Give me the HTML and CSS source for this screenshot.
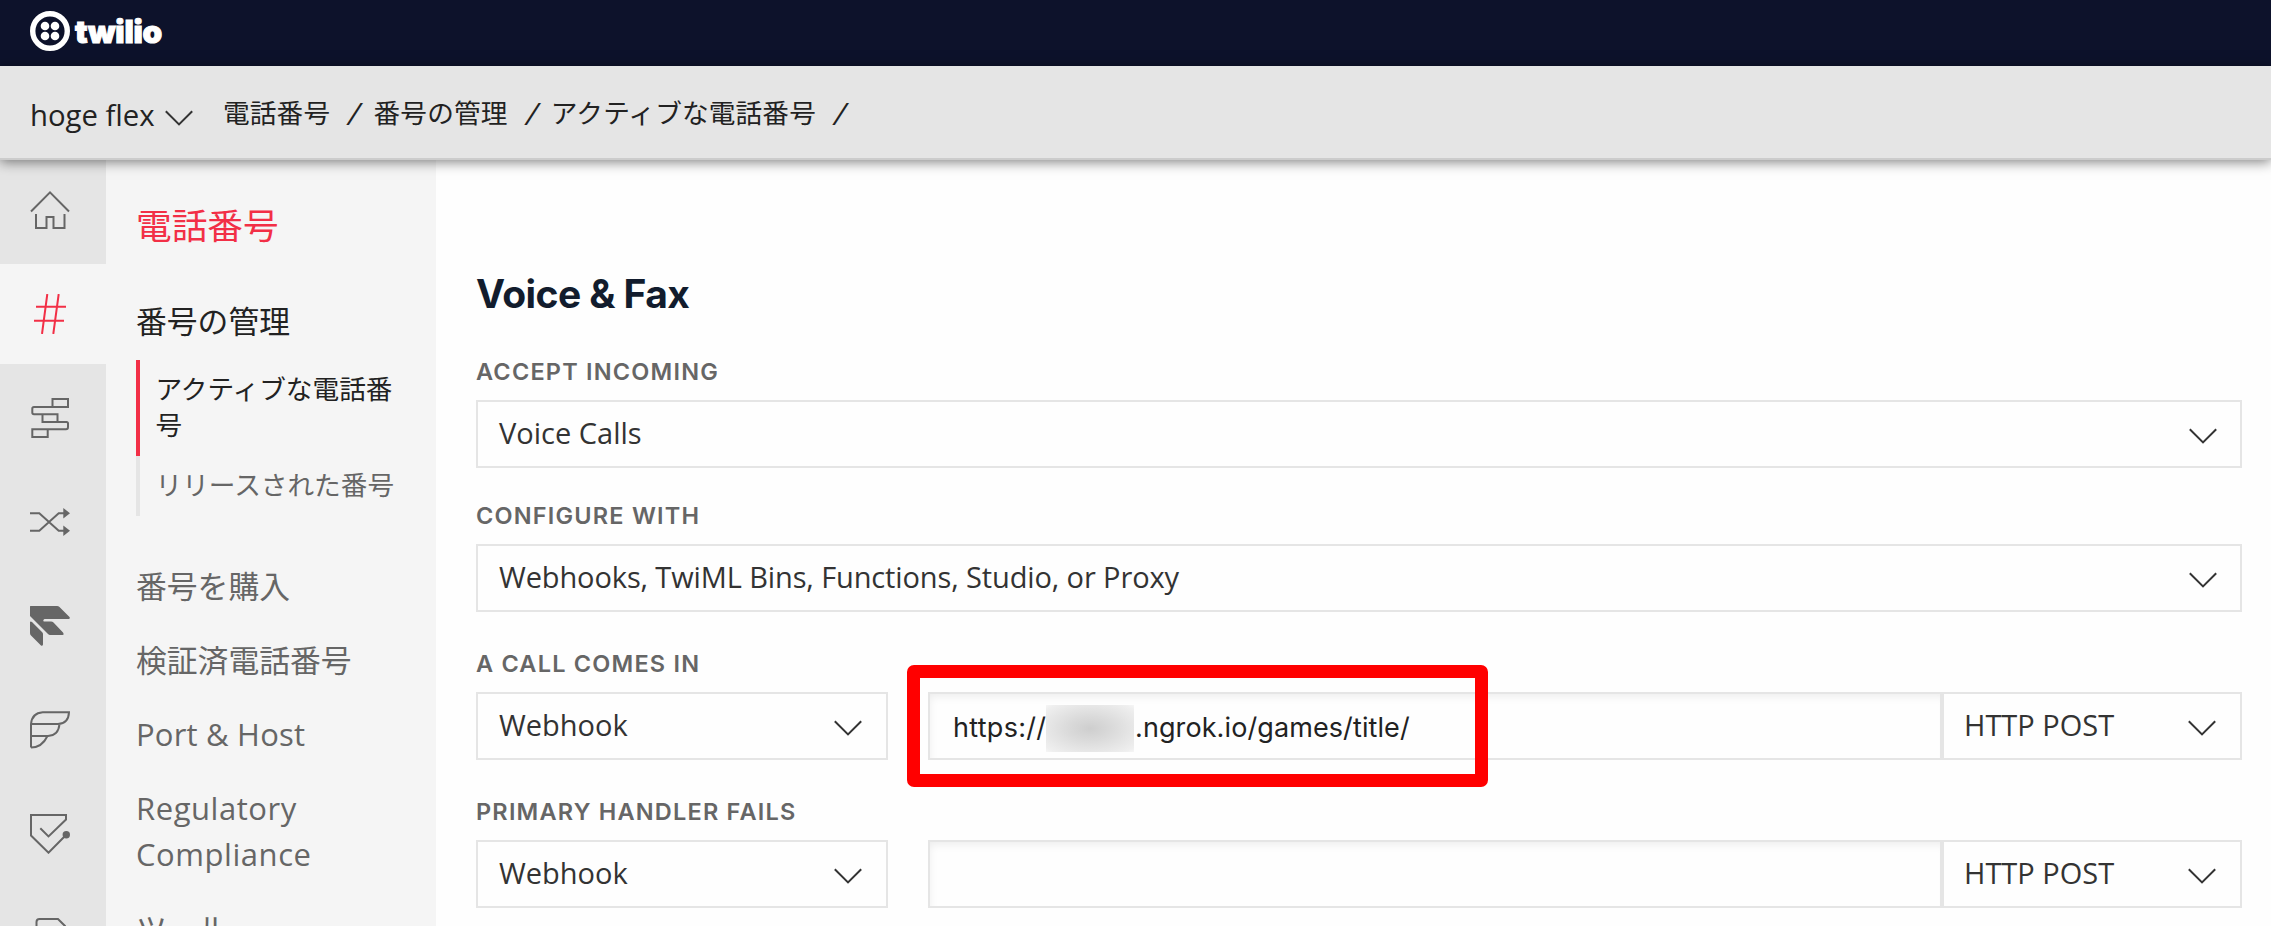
FILE: index.html
```html
<!DOCTYPE html>
<html lang="ja">
<head>
<meta charset="utf-8">
<title>Twilio Console</title>
<link rel="stylesheet" href="styles.css">
</head>
<body>
<svg class="defs" aria-hidden="true">
  <symbol id="chevron" viewBox="0 0 28 16"><path d="M.8 1.2L14 14.4L27.2 1.2" fill="none" stroke="currentColor" stroke-width="2"/></symbol>
</svg>
<header class="topbar">
  <svg class="logo-mark" viewBox="0 0 40 40"><circle cx="20" cy="20" r="17.3" fill="none" stroke="#fff" stroke-width="5.4"/><g fill="#fff"><circle cx="15" cy="15" r="4.3"/><circle cx="25" cy="15" r="4.3"/><circle cx="15" cy="25" r="4.3"/><circle cx="25" cy="25" r="4.3"/></g></svg>
  <span class="logo-word">twilio</span>
</header>
<nav class="crumbs">
  <span class="account">hoge flex</span>
  <svg class="chev account-chev"><use href="#chevron"/></svg>
  <span class="crumb">電話番号</span><span class="slash">/</span>
  <span class="crumb">番号の管理</span><span class="slash">/</span>
  <span class="crumb">アクティブな電話番号</span><span class="slash">/</span>
</nav>
<div class="body">
  <aside class="rail">
    <a class="rail-item first"><svg viewBox="0 0 40 40"><path d="M1 21.5L20 2.3L39 21.5M6 24V38H16.5V27H23.5V38H34.5V24"/></svg></a>
    <a class="rail-item active"><svg viewBox="0 0 40 40"><path d="M17.3 0L12 40M28.7 0L23.3 40M6 12.7H36M4 26.7H34"/></svg></a>
    <a class="rail-item"><svg viewBox="0 0 40 40"><path d="M22.5 9V1H38V9H4Q2.3 9 2.3 10.5V14.5Q2.3 16.3 4 16.3H27.5V24M12.5 16.3V24H36.5Q38 24 38 25.5V29Q38 31.3 36 31.3H2.3V39H17.7V31.3"/></svg></a>
    <a class="rail-item"><svg viewBox="0 0 40 40"><path d="M0 11.3H9.3L28.7 28.7H34M0 28.7H9.3L28.7 11.3H34"/><path class="fill" d="M33.3 6L40 11.3L33.3 16.6ZM33.3 23.4L40 28.7L33.3 34Z"/></svg></a>
    <a class="rail-item"><svg viewBox="0 0 40 40"><path class="fill" d="M0 .5Q0 0 .5 0H27Q28.500 0 29.500 1L39.500 11Q40.500 13 38.500 13H14.500Q12.500 14 13.800 15.500H21Q22.500 15.500 23.500 16.500L33 26.500Q34.500 29 32.500 29H20Q19 29 18 28L0 10ZM0 16Q.5 15 2 16L12 26Q13 27 13 28V38.500Q12.500 40.500 11 39.500L1 29.500Q0 28.500 0 27Z"/></svg></a>
    <a class="rail-item"><svg viewBox="0 0 40 40"><path d="M1 37.500V14Q2 3 12.700 2.200H39Q38.500 13.500 28 14H1M29.500 14Q28.500 25.500 18 26H1M17.500 26Q12 37.500 1 37.500"/></svg></a>
    <a class="rail-item"><svg viewBox="0 0 40 40"><path d="M10.300 14.300L18.500 22.400L36 5.500V1H1V21.500L18.500 38.700L36 21"/><circle class="fill" cx="36.300" cy="20.700" r="3.700"/></svg></a>
    <a class="rail-item"><svg viewBox="0 0 40 40"><path d="M6.500 39V4Q6.500 1 9.500 1H28L35 8V39Z"/></svg></a>
  </aside>
  <aside class="menu">
    <h2 class="menu-title">電話番号</h2>
    <a class="menu-item current">番号の管理</a>
    <div class="submenu">
      <a class="sub current">アクティブな電話番号</a>
      <a class="sub">リリースされた番号</a>
    </div>
    <a class="menu-item">番号を購入</a>
    <a class="menu-item">検証済電話番号</a>
    <a class="menu-item latin">Port &amp; Host</a>
    <a class="menu-item latin wider">Regulatory Compliance</a>
    <a class="menu-item">ツール</a>
  </aside>
  <main class="content">
    <h1 class="title">Voice &amp; Fax</h1>
    <section class="field">
      <label class="label">ACCEPT INCOMING</label>
      <div class="select wide"><span class="value">Voice Calls</span><svg class="chev"><use href="#chevron"/></svg></div>
    </section>
    <section class="field field-configure">
      <label class="label">CONFIGURE WITH</label>
      <div class="select wide"><span class="value value-long">Webhooks, TwiML Bins, Functions, Studio, or Proxy</span><svg class="chev"><use href="#chevron"/></svg></div>
    </section>
    <section class="field field-call">
      <label class="label">A CALL COMES IN</label>
      <div class="row">
        <div class="select kind"><span class="value">Webhook</span><svg class="chev"><use href="#chevron"/></svg></div>
        <div class="input"><span class="url url-start">https://</span><span class="masked"></span><span class="url url-end">.ngrok.io/games/title/</span><div class="highlight"></div></div>
        <div class="select method"><span class="value">HTTP POST</span><svg class="chev"><use href="#chevron"/></svg></div>
      </div>
    </section>
    <section class="field">
      <label class="label">PRIMARY HANDLER FAILS</label>
      <div class="row">
        <div class="select kind"><span class="value">Webhook</span><svg class="chev"><use href="#chevron"/></svg></div>
        <div class="input"></div>
        <div class="select method"><span class="value">HTTP POST</span><svg class="chev"><use href="#chevron"/></svg></div>
      </div>
    </section>
  </main>
</div>
</body>
</html>
```
FILE: styles.css
```css
* { box-sizing: border-box; }
body {
  margin: 0;
  height: 926px;
  overflow: hidden;
  display: flex;
  flex-direction: column;
  background: #fefefe;
  color: #222;
  font-family: "Open Sans", "Noto Sans CJK JP", sans-serif;
}
.defs { position: absolute; width: 0; height: 0; }
svg { flex: none; display: block; }

.topbar {
  height: 66px;
  flex: none;
  display: flex;
  align-items: center;
  padding: 0 0 4px 30px;
  background: #0d122b;
}
.logo-mark { width: 40px; height: 40px; }
.logo-word {
  margin-left: 5px;
  padding-top: 2px;
  color: #fff;
  font: 900 31.5px/40px Inter, sans-serif;
  letter-spacing: -.3px;
  -webkit-text-stroke: 1px #fff;
}

.crumbs {
  position: relative;
  z-index: 2;
  height: 94px;
  flex: none;
  display: flex;
  align-items: center;
  padding-left: 30px;
  background: #e5e5e5;
  border-bottom: 2px solid #ccc;
  box-shadow: 0 2px 12px rgba(0, 0, 0, .5);
  white-space: nowrap;
}
.account { width: 135px; padding-top: 5px; font-size: 29.3px; font-weight: 500; line-height: 40px; }
.chev { width: 28px; height: 16px; color: #333; }
.account-chev { margin: 12px 30px 0 0; }
.crumb { padding-top: 2px; font-size: 26.67px; line-height: 40px; letter-spacing: .15px; }
.slash {
  width: 43.3px;
  padding: 2px 0 0 19.5px;
  font-size: 31px;
  line-height: 40px;
  transform: skewX(-15deg);
}

.body { flex: 1; min-height: 0; display: flex; overflow: hidden; }
.rail { width: 106px; flex: none; background: #e5e5e5; }
.rail-item {
  display: flex;
  align-items: center;
  height: 104px;
  padding-left: 30px;
  border: solid #e5e5e5;
  border-width: 2px 0;
  color: #666;
}
.rail-item.first { margin-top: -2px; }
.rail-item.active { background: #f5f5f5; color: #f22f46; }
.rail svg { width: 40px; height: 40px; fill: none; stroke: currentColor; stroke-width: 2; }
.rail .fill { fill: currentColor; stroke: none; }

.menu {
  width: 330px;
  flex: none;
  padding: 43px 30px 0;
  background: #f5f5f5;
}
.menu-title {
  margin: 0 0 50px;
  color: #f22f46;
  font-size: 35.7px;
  font-weight: 400;
  line-height: 45px;
}
.menu-item {
  display: block;
  margin-bottom: 28px;
  color: #666;
  font-size: 30.8px;
  line-height: 46px;
}
.menu-item.latin { font-size: 31px; letter-spacing: .2px; }
.menu-item.wider { letter-spacing: .55px; }
.menu-item.current { margin-bottom: 16px; color: #222; }
.submenu { margin-bottom: 47px; }
.sub {
  display: block;
  padding: 11px 0 13px 15.5px;
  margin-right: -4px;
  border-left: 4px solid #e5e5e5;
  color: #666;
  font-size: 26.67px;
  line-height: 36px;
}
.sub.current { height: 96px; padding-right: 10px; border-color: #f22f46; color: #222; }

.content { flex: 1; padding: 108px 29px 0 40px; }
.title {
  margin: 0 0 40px;
  color: #121c2d;
  font: 700 39px/52px Inter, sans-serif;
  letter-spacing: -.57px;
}
.field { margin-bottom: 36px; }
.field-configure, .field-call { margin-bottom: 40px; }
.label {
  display: block;
  margin-bottom: 16px;
  color: #666;
  font: 600 23.5px/24px Inter, sans-serif;
  letter-spacing: 1.2px;
}
.select, .input {
  height: 68px;
  display: flex;
  align-items: center;
  border: 2px solid #e5e5e5;
  background: #fefefe;
}
.select { justify-content: space-between; padding: 0 24px 0 21px; }
.select.wide { padding-right: 23px; }
.value {
  color: #333;
  font-size: 29px;
  line-height: 40px;
  padding-bottom: 2px;
  white-space: nowrap;
}
.value-long { letter-spacing: -.12px; }
.select .chev { margin-top: 4px; }
.row { display: flex; }
.kind { width: 412px; margin-right: 40px; }
.input {
  position: relative;
  flex: 1;
  padding-left: 23px;
  box-shadow: inset 3px 6px 10px -4px rgba(0, 0, 0, .08);
}
.method { width: 300px; }
.method .value { margin-left: -1px; }
.url {
  padding-top: 4px;
  font: 400 27px/40px Inter, sans-serif;
  white-space: nowrap;
}
.url-start { width: 93px; letter-spacing: .3px; }
.url-end { letter-spacing: .1px; }
.masked {
  width: 88px;
  height: 47px;
  margin: 5px 1px 0 0;
  background: radial-gradient(ellipse at center, #cecece 0, #dadada 35%, #efefef 90%, #f6f6f6 100%);
}
/* Annotation frame drawn over the URL */
.highlight {
  position: absolute;
  left: -23px;
  top: -29px;
  width: 581px;
  height: 122px;
  border: 13px solid #f00;
  border-radius: 7px;
}
```
